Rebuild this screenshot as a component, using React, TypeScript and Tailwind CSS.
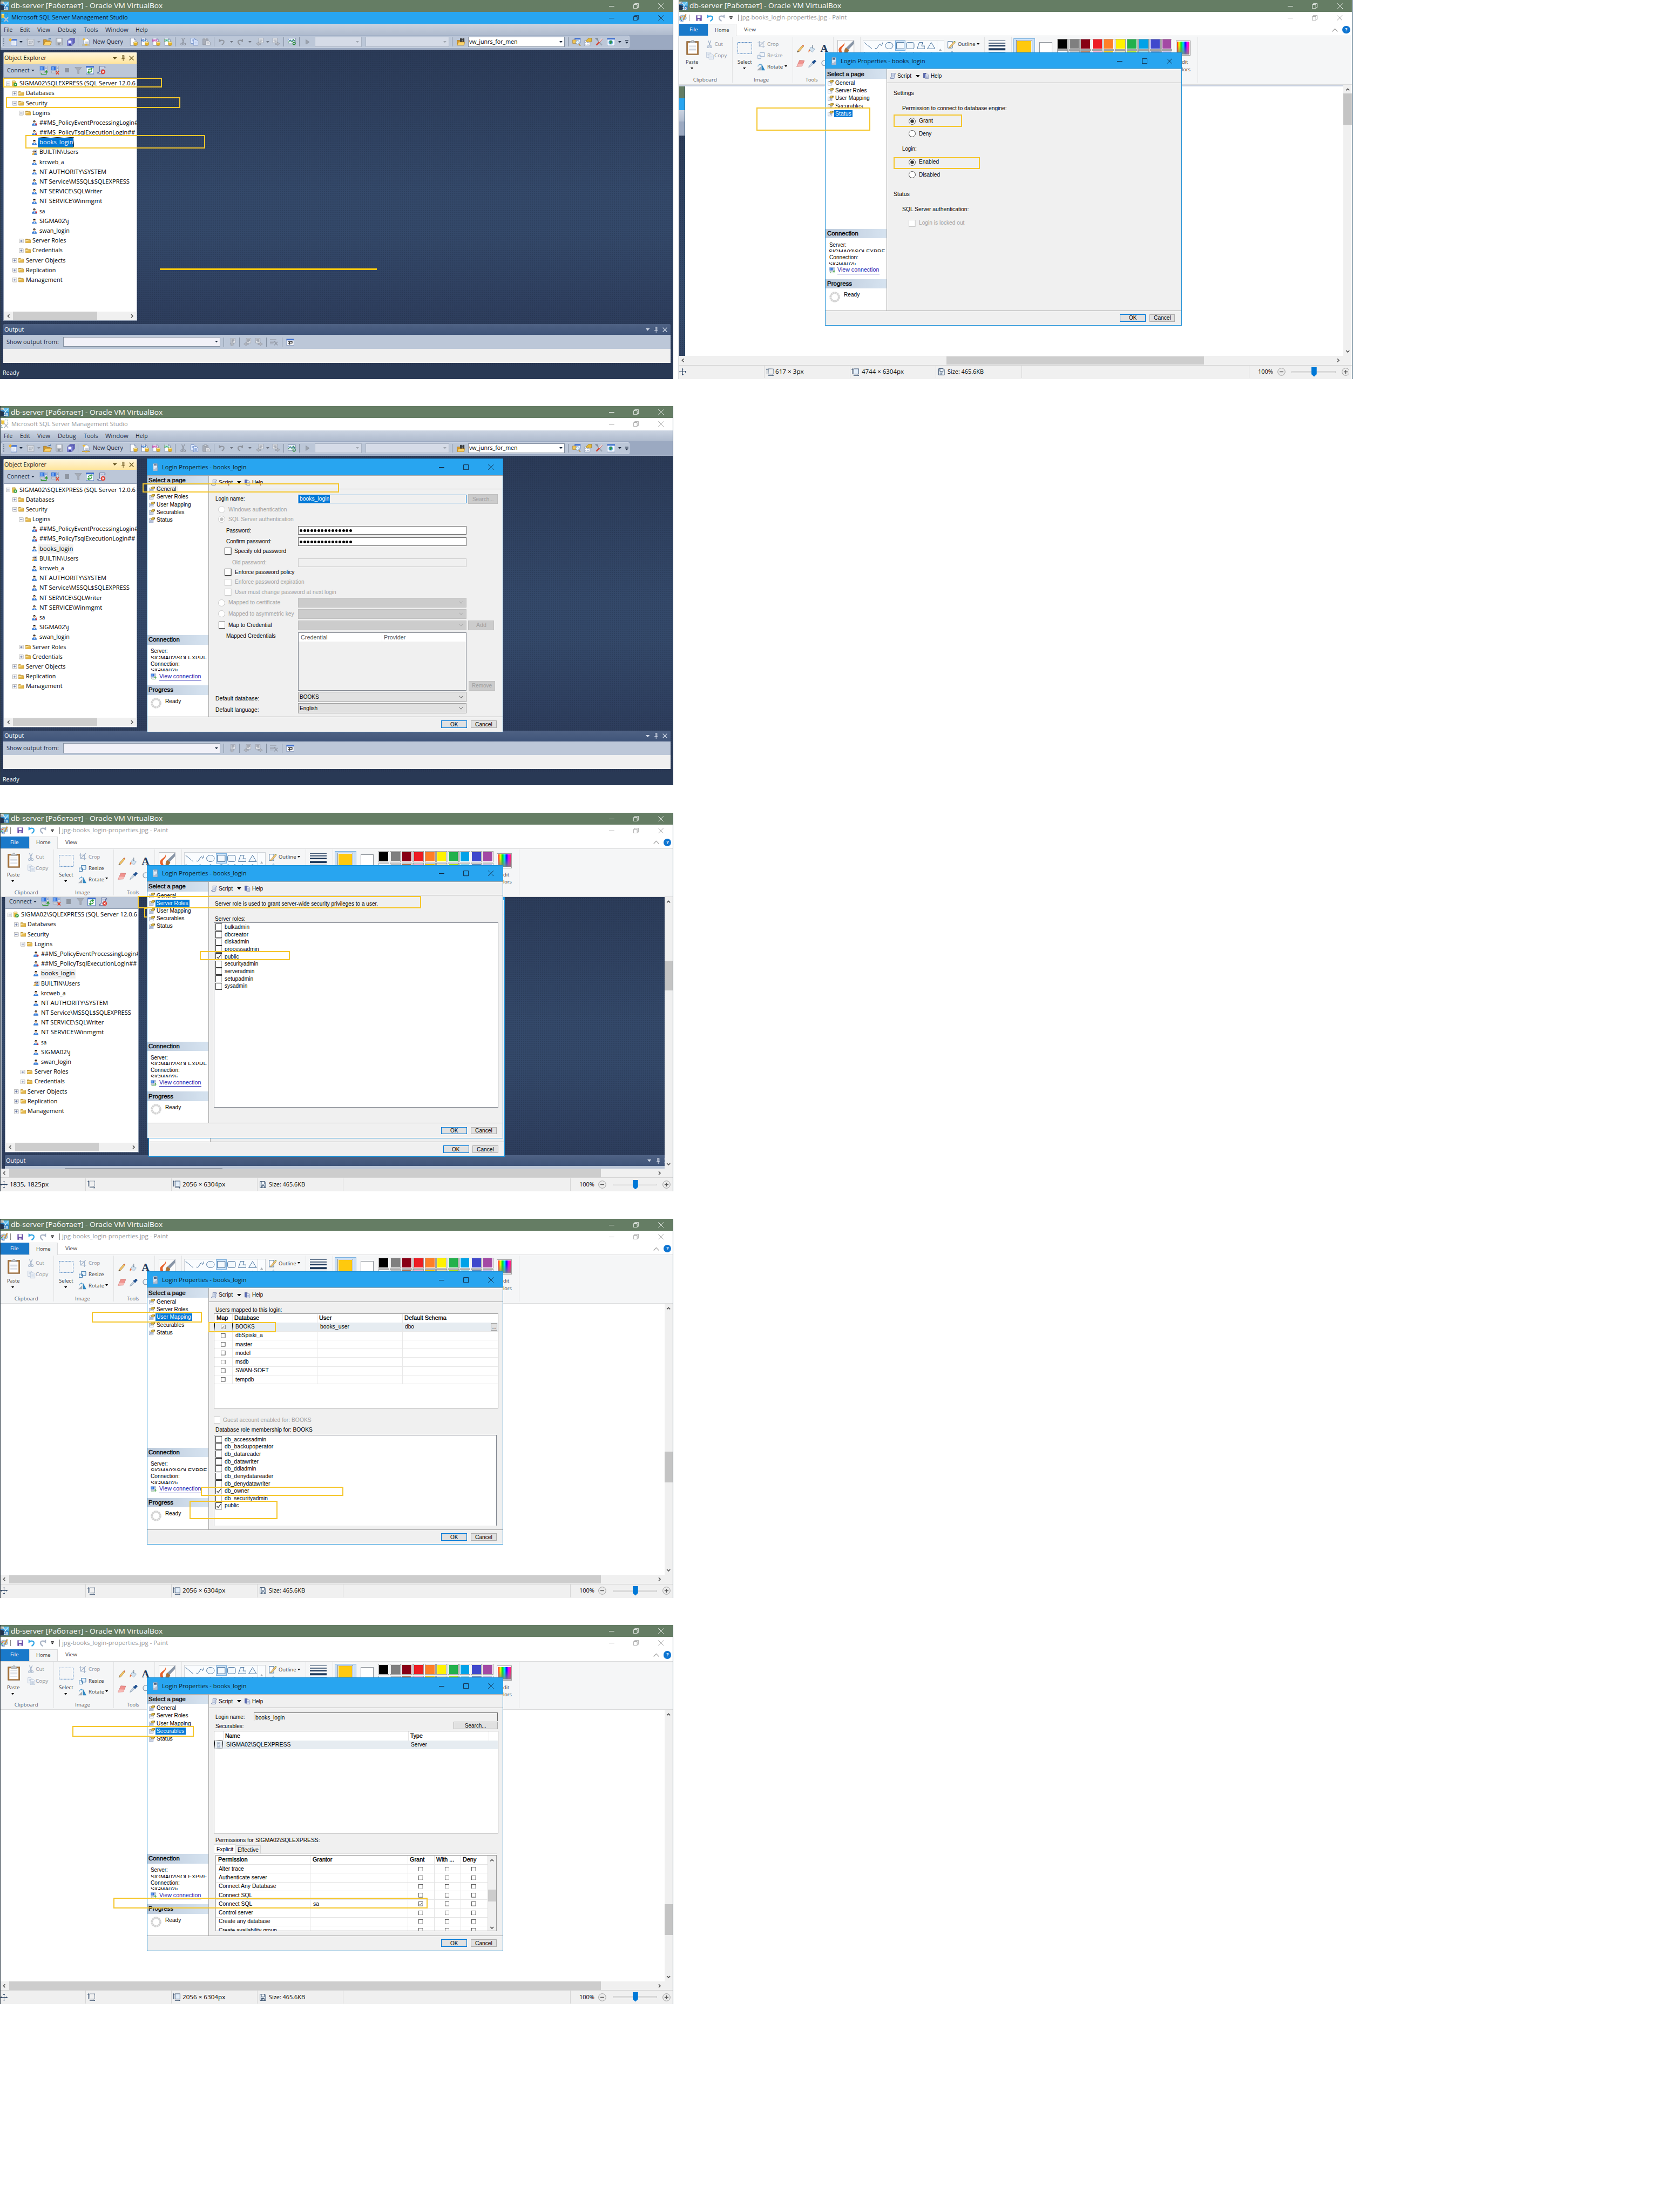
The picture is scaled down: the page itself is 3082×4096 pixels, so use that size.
import React, { useLayoutEffect, useRef } from "react";

type Node = React.ReactNode;
type Cell = [number, number, Node];

/* ---------- layout and text helpers ---------- */

function Flow({ col, from = 0, items, className = "" }: { col?: boolean; from?: number; items: Cell[]; className?: string }) {
  let end = from;
  return (
    <div className={(col ? "flex flex-col items-stretch " : "flex flex-row items-center h-full ") + className}>
      {items.map(([at, size, node], i) => {
        const gap = at - end;
        end = at + size;
        return (
          <div
            key={i}
            className={col ? "shrink-0" : "shrink-0 flex items-center"}
            style={col ? { marginTop: gap, height: size } : { marginLeft: gap, width: size }}
          >
            {node}
          </div>
        );
      })}
    </div>
  );
}

function T({ w, children, className = "" }: { w: number; children: Node; className?: string }) {
  const ref = useRef<HTMLSpanElement>(null);
  useLayoutEffect(() => {
    const el = ref.current;
    if (!el || !el.parentElement) return;
    el.style.transform = "none";
    const natural = el.getBoundingClientRect().width;
    const target = el.parentElement.getBoundingClientRect().width;
    if (natural > 0) el.style.transform = `scaleX(${target / natural})`;
  });
  return (
    <span className={"block shrink-0 whitespace-nowrap leading-[1.3] " + className} style={{ width: w }}>
      <span ref={ref} className="inline-block origin-left">
        {children}
      </span>
    </span>
  );
}

const tx = (x: number, w: number, s: string, className = ""): Cell => [x, w, s ? <T w={w} className={className}>{s}</T> : null];
const ic = (center: number, size: number, node: Node): Cell => [center - size / 2, size, node];
const line = (center: number, h: number, items: Cell[], from = 175): Cell => [center - h / 2, h, <Flow from={from} items={items} />];

function Svg({ w, h, vb, children, className = "" }: { w: number; h: number; vb?: string; children: Node; className?: string }) {
  return (
    <svg width={w} height={h} viewBox={vb || `0 0 ${w} ${h}`} className={"shrink-0 block " + className} fill="none" preserveAspectRatio="none">
      {children}
    </svg>
  );
}

const Tri = ({ c = "#1b293e", w = 9, h = 5 }: { c?: string; w?: number; h?: number }) => (
  <Svg w={w} h={h} vb="0 0 10 6"><path d="M0 0h10L5 6z" fill={c} /></Svg>
);
const Chevron = ({ dir, c = "#505050" }: { dir: "l" | "r" | "u" | "d"; c?: string }) => {
  const d = { l: "M9 2L4 7l5 5", r: "M5 2l5 5-5 5", u: "M2 9l5-5 5 5", d: "M2 5l5 5 5-5" }[dir];
  return <Svg w={13} h={13} vb="0 0 14 14"><path d={d} stroke={c} strokeWidth="2.6" /></Svg>;
};

/* ---------- window chrome ---------- */

function WinButtons({ c, single }: { c: string; single?: boolean }) {
  return (
    <div className="flex items-center h-full">
      <Svg w={16} h={16}><path d="M0 8.5h15" stroke={c} strokeWidth="1.4" /></Svg>
      <div className="w-[54px]" />
      <Svg w={16} h={16}>
        {single ? <path d="M1 1h14v14H1z" stroke={c} strokeWidth="1.4" /> : <path d="M1 4h10v11H1zM4 4V1h11v11h-4" stroke={c} strokeWidth="1.3" />}
      </Svg>
      <div className="w-[55px]" />
      <Svg w={16} h={16}><path d="M0.5 0.5l15 15M15.5 0.5l-15 15" stroke={c} strokeWidth="1.4" /></Svg>
    </div>
  );
}

function VmTitle() {
  return (
    <div className="h-[34px] shrink-0 bg-[#657d64] text-white text-[19px] font-['Open_Sans',sans-serif]">
      <Flow
        items={[
          [2, 24, (
            <Svg w={24} h={25}>
              <path d="M0 0h24v25H0z" fill="#2f86c8" />
              <path d="M11 0h13v12L11 10z" fill="#5cc1f2" />
              <path d="M0 9l10 3 5 13H0z" fill="#22344f" />
              <path d="M9 3l7 11M22 2L11 14" stroke="#e8f4fb" strokeWidth="1.6" />
              <path d="M0 0h9v7H0z" fill="#eef2f4" />
              <text x="0.5" y="6" fontSize="6.5" fill="#333" fontFamily="Liberation Sans">64</text>
              <text x="9" y="23" fontSize="11" fontWeight="bold" fill="#fff" fontFamily="Liberation Sans">10</text>
            </Svg>
          )],
          tx(31, 433, "db-server [Работает] - Oracle VM VirtualBox", "pt-px"),
          [1736, 160, <WinButtons c="#ffffff" />],
        ]}
      />
    </div>
  );
}

const Frame = () => <div className="absolute inset-0 border-l-[1.6px] border-r-[1.6px] border-l-[#2f3b46] border-r-[#17405b]" />;

/* ---------- small icons ---------- */

const Expander = ({ plus }: { plus?: boolean }) => (
  <Svg w={13} h={13}>
    <rect x="0.5" y="0.5" width="12" height="12" rx="1" fill="#f4f4f4" stroke="#8f8f8f" />
    <path d={plus ? "M3 6.5h7M6.5 3v7" : "M3 6.5h7"} stroke="#34498c" strokeWidth="1.2" />
  </Svg>
);
const Folder = () => (
  <Svg w={16} h={13}>
    <path d="M0 1.5Q0 0 1.5 0H6l1.5 2H14v2H0z" fill="#c39a3c" />
    <path d="M0.5 3H14q1.5 0 1.5 1.5v7q0 1-1 1h-13q-1 0-1-1z" fill="#e6b94e" stroke="#a67c26" strokeWidth="0.8" />
    <path d="M1 3.5h13L1 8z" fill="#fbe6a4" />
  </Svg>
);
const ServerGo = () => (
  <Svg w={15} h={17}>
    <path d="M0.5 2.5v11q0 2.5 5 2.5t5-2.500v-11z" fill="#e9c24a" stroke="#a8842a" strokeWidth="0.7" />
    <ellipse cx="5.500" cy="2.500" rx="5" ry="2" fill="#f8eaa5" stroke="#a8842a" strokeWidth="0.700" />
    <circle cx="10" cy="11.500" r="5" fill="#2f9a3f" />
    <path d="M8.500 8.500l4 3-4 3z" fill="#fff" />
  </Svg>
);
const User = ({ down }: { down?: boolean }) => (
  <Svg w={15} h={15}>
    <path d="M0.500 14.500q0-6.500 6.500-6.500t6.500 6.500z" fill="#3f86e0" stroke="#2c62b8" strokeWidth="0.700" />
    <path d="M5 8.500h4L7 13z" fill="#fff" />
    <circle cx="7" cy="4.800" r="3" fill="#eebd8e" />
    <path d="M3.800 5Q3 0 7 0t3.200 5Q9.500 3 7 3T3.800 5z" fill="#1d1712" />
    {down && <path d="M12.500 7v6M10.700 11l1.800 3 1.800-3z" stroke="#d22" strokeWidth="1.300" fill="#d22" />}
  </Svg>
);
const Group = () => (
  <Svg w={16} h={16}>
    <path d="M6 0h10v14H6z" fill="#dfe7f5" stroke="#3d62a8" strokeWidth="0.700" />
    <path d="M8 3h6M8 5h6" stroke="#6d87bd" strokeWidth="0.800" />
    <path d="M0 15q0-5 5-5t5 5z" fill="#e0ad33" />
    <path d="M6 15q0-4.500 4.500-4.500T15 15z" fill="#3f86e0" />
    <circle cx="5" cy="7" r="2.700" fill="#eebd8e" /><circle cx="10.500" cy="8" r="2.500" fill="#eebd8e" />
    <path d="M2 7q0-4 3-4t3 4q-1-2-3-2T2 7zM8 8q0-3.500 2.500-3.500T13 8q-1-1.500-2.500-1.500T8 8z" fill="#1d1712" />
  </Svg>
);
const Pin = ({ c }: { c: string }) => (
  <Svg w={10} h={17}><path d="M2.500 1h5v9h-5zM6 1v9M0 10.500h10M5 10.500V17" stroke={c} strokeWidth="1.400" /></Svg>
);
const Cross = ({ c }: { c: string }) => <Svg w={14} h={14}><path d="M1 1l12 12M13 1L1 13" stroke={c} strokeWidth="2" /></Svg>;

const Doc = ({ tag, tc }: { tag?: string; tc?: string }) => (
  <Svg w={23} h={23}>
    <path d="M2 1h11l5 5v16H2z" fill="#fbfcff" stroke="#5d6f96" />
    <path d="M13 1v5h5" fill="#c9d5ea" stroke="#5d6f96" />
    <path d="M12 13v7q0 2 5 2t5-2v-7z" fill="#e8b62a" stroke="#9c7616" strokeWidth="0.800" />
    <ellipse cx="17" cy="13" rx="5" ry="2" fill="#fbe998" stroke="#9c7616" strokeWidth="0.800" />
    {tag && <text x="0" y="11" fontSize="8.500" fontWeight="bold" fill={tc} fontFamily="Liberation Mono">{tag}</text>}
  </Svg>
);
const NewProject = () => (
  <Svg w={24} h={24}>
    <path d="M7 4h16v19H7z" fill="#eef3fc" stroke="#3e66b5" /><path d="M7 4h16v4H7z" fill="#3e6fd0" />
    <path d="M10 12h9M10 15h9M10 18h6" stroke="#b9c6de" strokeWidth="1.500" />
    <path d="M5 0l1.500 4L11 5 7 7l0 5-3-3-4 1 2-4-2-4 4 1z" fill="#f3b72e" />
  </Svg>
);
const GrayGrid = () => (
  <Svg w={24} h={24}>
    <path d="M5 4h18v18H5z" fill="#d7dbe2" stroke="#8d949f" /><path d="M8 10h3v3H8zM13 10h3v3h-3zM8 15h3v3H8zM13 15h3v3h-3zM18 10h2v3h-2z" fill="#9aa1ac" />
    <path d="M4 0l1.500 3.500L9 5 5.500 6.500 4 10 2.500 6.500 0 5l2.500-1.500z" fill="#b3b8c0" />
  </Svg>
);
const OpenFolder = () => (
  <Svg w={25} h={22}>
    <path d="M1 5h8l2 3h9v12H1z" fill="#d69a2c" stroke="#8f671c" /><path d="M6 11h18l-4 10H1z" fill="#fbd36b" stroke="#a87820" />
    <path d="M13 5q3-4 8-2M21 0v4h-4" stroke="#5b7fae" strokeWidth="1.600" />
  </Svg>
);
const Floppy = ({ c, d }: { c: string; d: string }) => (
  <Svg w={21} h={21}><path d="M1 1h19v19H3l-2-2z" fill={c} stroke={d} /><path d="M5 1h11v9H5z" fill="#f0f2f6" /><path d="M6 13h9v7H6z" fill={d} /><path d="M12 14.500h2v4h-2z" fill="#f0f2f6" /></Svg>
);
const FloppyStack = () => (
  <Svg w={23} h={23}>
    <path d="M8 1h14v14H8z" fill="#6f73c9" stroke="#3a3d8e" /><path d="M5 4h14v14H5z" fill="#7f83d6" stroke="#3a3d8e" />
    <path d="M1 8h14v14H1z" fill="#8f93e6" stroke="#3a3d8e" /><path d="M4 8h8v6H4z" fill="#fff" /><path d="M5 17h6v5H5z" fill="#3a3d8e" />
  </Svg>
);
const NewQuery = () => (
  <Svg w={24} h={25}>
    <path d="M5 3h10l5 5v11H5z" fill="#fbfcff" stroke="#5d6f96" /><path d="M9 12v5q0 1.500 4.500 1.500T18 17v-5z" fill="#c9cfda" />
    <path d="M0 22h24M12 19v3" stroke="#b98b1f" strokeWidth="2" /><path d="M9 20h6v4H9z" fill="#e8b62a" />
    <path d="M5.500 0l1.500 4 4 1.500-4 1.500-1.500 4L4 7 0 5.500 4 4z" fill="#f6b91e" />
  </Svg>
);
const Scissors = ({ c = "#8a909c" }: { c?: string }) => (
  <Svg w={16} h={22}><path d="M4 0l6 15M12 0L6 15" stroke={c} strokeWidth="2" /><circle cx="4" cy="18" r="2.800" stroke={c} strokeWidth="1.800" /><circle cx="12" cy="18" r="2.800" stroke={c} strokeWidth="1.800" /></Svg>
);
const CopyIcon = ({ c = "#3e66b5", f = "#e6efff" }: { c?: string; f?: string }) => (
  <Svg w={22} h={22}><path d="M1 1h9l3 3v12H1z" fill={f} stroke={c} /><path d="M3.500 6h6M3.500 9h6" stroke={c} /><path d="M8 6h9l4 4v11H8z" fill={f} stroke={c} /><path d="M11 12h7M11 15h7M11 18h7" stroke={c} /></Svg>
);
const PasteGray = () => (
  <Svg w={23} h={22}><path d="M1 3h15v17H1z" fill="#a9aeb8" stroke="#7f8591" /><path d="M5 1h7v4H5z" fill="#d9dce2" stroke="#7f8591" /><path d="M9 9h9l4 4v8H9z" fill="#e3e5ea" stroke="#7f8591" /><path d="M12 14h7M12 17h7" stroke="#9a9fab" /></Svg>
);
const Curl = ({ flip, c = "#8f949e", w = 18 }: { flip?: boolean; c?: string; w?: number }) => (
  <Svg w={w} h={w} vb="0 0 18 18" className={flip ? "-scale-x-100" : ""}><path d="M4 5q7-3 10.500 1 2.500 6-5.500 11" stroke={c} strokeWidth="3" /><path d="M1 0v9.500l7.500-4.500z" fill={c} /></Svg>
);
const Nav = ({ flip, up }: { flip?: boolean; up?: boolean }) => (
  <Svg w={23} h={23} className={flip ? "-scale-x-100" : ""}>
    <path d="M8 1h13v13H8z" fill="#e3e5ea" stroke="#8a909c" /><path d="M10 4h9M10 7h9M10 10h6" stroke="#8a909c" strokeWidth="1.200" />
    {up ? <path d="M12 12l6 5h-3v6H9v-6H6z" fill="#b4b8c0" stroke="#8a909c" /> : <path d="M1 17l7-5v3h6v4H8v3z" fill="#b4b8c0" stroke="#8a909c" />}
  </Svg>
);
const Activity = () => (
  <Svg w={24} h={22}><path d="M1 1h21v16H1z" fill="#e9f0fb" stroke="#5a6e93" /><path d="M2 13l5-7 5 6 4-7 5 5" stroke="#2b8b3a" strokeWidth="1.800" /><path d="M2 5l6 5 6-4 7 8" stroke="#3c6fd0" strokeWidth="1.400" /><circle cx="18" cy="16" r="3.500" stroke="#218a2f" strokeWidth="2" /></Svg>
);
const PcPlug = ({ x, s = 25 }: { x?: boolean; s?: number }) => (
  <Svg w={s} h={s} vb="0 0 25 25">
    <path d="M1 1h14v12H1z" fill="#2e6fdc" stroke="#9fb6d8" strokeWidth="1.500" /><path d="M3 3h6v8H3z" fill="#6fa5f2" /><path d="M2 15h12v5H2z" fill="#d6dbe3" stroke="#8591a5" />
    <path d="M16 1h6v13h-6z" fill="#e3e8ef" stroke="#8591a5" /><path d="M17 4h4M17 7h4" stroke="#3c6fd0" />
    {x ? <path d="M15 15l8 9M23 15l-8 9" stroke="#e03a1e" strokeWidth="2.600" /> : <path d="M5 20v4h15v-9M16.500 18l3.500-5 3.500 5z" stroke="#2f9a2f" strokeWidth="1.800" fill="#2f9a2f" fillOpacity="0" />}
  </Svg>
);
const Funnel = () => <Svg w={21} h={20}><path d="M1 1h19l-7 9v9H9v-9z" fill="#a8adb7" stroke="#888e99" /></Svg>;
const Refresh = () => (
  <Svg w={24} h={24}><path d="M1 1h22v22H1z" fill="#f8fbff" stroke="#3e66b5" strokeWidth="1.500" /><path d="M1 1h22v4H1z" fill="#3e6fd0" /><path d="M7 13q1-5 8-4M15 6v5l3-3zM17 13q-1 6-8 5M9 21v-6l-4 3z" stroke="#2f9a3a" strokeWidth="2" fill="#2f9a3a" fillOpacity="0.300" /></Svg>
);
const ScriptIcon = ({ err, s = 17 }: { err?: boolean; s?: number }) => (
  <Svg w={s} h={s} vb="0 0 20 20">
    <path d="M6 1h11q2 0 2 3h-3v11q0 4-3 4H3q-2 0-2-3h3q2-2 2-5z" fill="#e2e9f5" stroke="#58699a" strokeWidth="1.300" /><path d="M8 5h6M8 8h6M8 11h6M7 14h6" stroke="#7c8fb8" />
    {err && <><circle cx="14" cy="14" r="5.500" fill="#dc4238" /><path d="M12 12l4 4M16 12l-4 4" stroke="#fff" strokeWidth="1.500" /></>}
  </Svg>
);
const HelpDoc = () => (
  <Svg w={16} h={17}><path d="M0.700 0.700h7v13h-7z" fill="#5868b4" stroke="#3b4583" /><path d="M6 3h6l3 3v10H6z" fill="#eef2fb" stroke="#58699a" /><path d="M8 8h5M8 10.500h5M8 13h5" stroke="#6d82b8" /></Svg>
);
const ServerBox = ({ w = 14, h = 22 }: { w?: number; h?: number }) => (
  <Svg w={w} h={h} vb="0 0 14 22"><path d="M1 2q0-1.500 1.500-1.500h9Q13 0.500 13 2v19H1z" fill="#dde6f1" stroke="#70839f" /><path d="M3 4h8M3 7h8" stroke="#4a5f80" strokeWidth="1.600" /><path d="M9 12h4v9H1v-4q6 0 8-5z" fill="#aebdd2" /></Svg>
);
const PageIcon = () => (
  <Svg w={17} h={16}>
    <path d="M1 4h11v11H1z" fill="#fff" stroke="#5f77a8" /><path d="M3 8h2M3 11h2M6.500 8h4M6.500 11h4" stroke="#3d5c9c" strokeWidth="1.200" />
    <path d="M5 4l5-4h6v5l-4 3-2-2-3 1z" fill="#d9b445" stroke="#6d571a" strokeWidth="0.800" /><path d="M13 1.500h3v4" fill="#3c3c30" />
  </Svg>
);

/* ---------- management studio ---------- */

type TreeRow = { lvl: number; kind: "server" | "folder" | "user" | "userdown" | "group"; plus?: boolean; w: number; t: string };
const TREE: TreeRow[] = [
  { lvl: 0, kind: "server", w: 331, t: "SIGMA02\\SQLEXPRESS (SQL Server 12.0.6" },
  { lvl: 1, kind: "folder", plus: true, w: 81, t: "Databases" },
  { lvl: 1, kind: "folder", w: 61, t: "Security" },
  { lvl: 2, kind: "folder", w: 51, t: "Logins" },
  { lvl: 3, kind: "userdown", w: 282, t: "##MS_PolicyEventProcessingLogin#" },
  { lvl: 3, kind: "userdown", w: 273, t: "##MS_PolicyTsqlExecutionLogin##" },
  { lvl: 3, kind: "user", w: 96, t: "books_login" },
  { lvl: 3, kind: "group", w: 111, t: "BUILTIN\\Users" },
  { lvl: 3, kind: "user", w: 70, t: "krcweb_a" },
  { lvl: 3, kind: "user", w: 191, t: "NT AUTHORITY\\SYSTEM" },
  { lvl: 3, kind: "user", w: 257, t: "NT Service\\MSSQL$SQLEXPRESS" },
  { lvl: 3, kind: "user", w: 179, t: "NT SERVICE\\SQLWriter" },
  { lvl: 3, kind: "user", w: 179, t: "NT SERVICE\\Winmgmt" },
  { lvl: 3, kind: "userdown", w: 16, t: "sa" },
  { lvl: 3, kind: "user", w: 84, t: "SIGMA02\\j" },
  { lvl: 3, kind: "user", w: 86, t: "swan_login" },
  { lvl: 2, kind: "folder", plus: true, w: 96, t: "Server Roles" },
  { lvl: 2, kind: "folder", plus: true, w: 86, t: "Credentials" },
  { lvl: 1, kind: "folder", plus: true, w: 113, t: "Server Objects" },
  { lvl: 1, kind: "folder", plus: true, w: 85, t: "Replication" },
  { lvl: 1, kind: "folder", plus: true, w: 104, t: "Management" },
];

function TreeLine({ r, focus }: { r: TreeRow; focus?: boolean }) {
  const sel = r.t === "books_login";
  const x = r.lvl === 0 ? 54.5 : r.lvl === 1 ? 73.5 : r.lvl === 2 ? 92.5 : 111.4;
  const icon = r.kind === "server" ? <ServerGo /> : r.kind === "folder" ? <Folder /> : r.kind === "group" ? <Group /> : <User down={r.kind === "userdown"} />;
  const cells: Cell[] = [];
  if (r.lvl < 3) cells.push([16 + r.lvl * 18.8, 13, <Expander plus={r.plus} />]);
  cells.push([x - 21, 16, icon]);
  cells.push([
    x - 2, r.w + 4,
    <div className={"h-[27px] w-full px-[2px] flex items-center " + (sel ? (focus ? "bg-[#0078d7] text-white outline-dotted outline-1 outline-[#332211]" : "bg-[#f0f0f0]") : "")}>
      <T w={r.w}>{r.t}</T>
    </div>,
  ]);
  return <div className="h-[28px] shrink-0"><Flow from={10} items={cells} /></div>;
}

const Sep = () => <div className="w-[1.6px] h-[26px] bg-[#8591a2]" />;

function ObjectExplorer({ focus }: { focus?: boolean }) {
  return (
    <div className="w-[382px] h-[765px] bg-white border border-[#8e9bb0] border-t-0 flex flex-col overflow-hidden rounded-t-[3px] text-[16px]">
      <div className="h-[31px] shrink-0 bg-gradient-to-b from-[#fff6dc] to-[#ffe59c] text-[15.5px] text-[#1b1b1b] pt-px">
        <Flow from={10} items={[tx(12, 120, "Object Explorer"), ic(326, 11, <Tri c="#5c4a16" w={11} h={6} />), ic(351, 10, <Pin c="#75612a" />), ic(375, 14, <Cross c="#5c4a16" />)]} />
      </div>
      <div className="h-[39px] shrink-0 bg-[#bcc7d8] text-[15.5px] text-[#1b293e]">
        <Flow
          from={10}
          items={[
            tx(20, 64, "Connect"), ic(94, 9, <Tri />), ic(124, 25, <PcPlug />), ic(157, 25, <PcPlug x />),
            ic(190, 13, <div className="w-[13px] h-[13px] bg-[#8f96a1]" />), ic(223, 21, <Funnel />), ic(256, 24, <Refresh />), ic(289, 24, <ScriptIcon err s={24} />),
          ]}
        />
      </div>
      <div className="pt-[3px] h-[668px] shrink-0 overflow-hidden border-t border-[#8e9bb0]">
        {TREE.map((r) => <TreeLine key={r.t} r={r} focus={focus} />)}
      </div>
      <div className="h-[25px] mx-px bg-[#f0f0f0]">
        <Flow from={11} items={[ic(24, 13, <Chevron dir="l" />), [37, 239, <div className="w-full h-[24px] bg-[#cdcdcd]" />], ic(375, 13, <Chevron dir="r" />)]} />
      </div>
    </div>
  );
}

function OutputPane() {
  return (
    <div className="w-[1902px] h-[110px] flex flex-col mt-[9px]">
      <div className="h-[31px] bg-gradient-to-b from-[#4f6284] to-[#3f5479] text-white text-[15.5px] rounded-t-[3px] pt-px">
        <Flow from={9} items={[tx(12, 56, "Output"), ic(1846, 11, <Tri c="#d4dbe8" w={11} h={7} />), ic(1871, 10, <Pin c="#d4dbe8" />), ic(1895, 14, <Cross c="#d4dbe8" />)]} />
      </div>
      <div className="h-[39px] bg-[#bcc7d8] text-[15.5px] text-[#1b293e]">
        <Flow
          from={9}
          items={[
            tx(19, 149, "Show output from:"),
            [179.5, 449, <div className="h-[29px] w-full bg-[#f2f1f8] border-[1.6px] border-[#8591a2] flex items-center justify-end pr-[5px]"><Tri /></div>],
            ic(638.5, 2, <Sep />), ic(661, 23, <Nav up />), ic(683, 2, <Sep />), ic(706.5, 23, <Nav />), ic(738, 23, <Nav flip />), ic(760, 2, <Sep />),
            ic(782, 24, <Svg w={24} h={20}><path d="M0 3h18M0 7h18M0 11h12M0 15h10" stroke="#9aa1ac" strokeWidth="1.800" /><path d="M12 8l10 11M22 9L12 19" stroke="#8a909c" strokeWidth="2" /></Svg>),
            ic(804, 2, <Sep />),
            ic(827, 23, <Svg w={23} h={20}><path d="M1 1h21v18H1z" fill="#fbfcff" stroke="#6d84b0" /><path d="M1 1h21v4H1z" fill="#3e6fd0" /><path d="M6 8h11v5H9M11 10l-4 3 4 3.500" stroke="#1b1b1b" strokeWidth="1.800" /></Svg>),
          ]}
        />
      </div>
      <div className="h-[40px] bg-[#f0f0f0]" />
    </div>
  );
}

const FlatCombo = () => (
  <div className="h-[29px] w-full bg-[#d5dbe7] border-[1.600px] border-[#a9b3c3] flex items-center justify-end pr-[6px]"><Tri c="#a0a6b0" /></div>
);

function Studio({ active, focus, children }: { active?: boolean; focus?: boolean; children?: Node }) {
  const tc = active ? "#1d1d2b" : "#999999";
  return (
    <div className="relative w-[1920px] h-[1080px] shrink-0 overflow-hidden bg-[#293955] flex flex-col font-['Open_Sans',sans-serif] text-[16px] text-black">
      <VmTitle />
      <div className={"h-[34px] shrink-0 text-[16.5px] " + (active ? "bg-[#28a5f0] text-[#101828]" : "bg-white text-[#999999]")}>
        <Flow
          items={[
            [3, 22, (
              <Svg w={22} h={25}>
                <path d="M1 2v9q0 2 4 2t4-2V2z" fill="#f0c83c" stroke="#a8842a" strokeWidth="0.700" /><ellipse cx="5" cy="2.500" rx="4" ry="1.700" fill="#fbe998" />
                <path d="M11 1h8v8M1 16v7h6" stroke="#3a7f8c" strokeWidth="1.200" strokeDasharray="3 1.500" />
                <path d="M8 10l12 13M20 11L9 23" stroke="#dfe5ec" strokeWidth="3" /><path d="M8 10l12 13M20 11L9 23" stroke="#66727f" strokeWidth="1" />
              </Svg>
            )],
            tx(32, 332, "Microsoft SQL Server Management Studio"),
            [1736, 160, <WinButtons c={tc} />],
          ]}
        />
      </div>
      <div className="h-[32px] shrink-0 bg-gradient-to-b from-[#cad3e1] to-[#aebacd] text-[15.5px] text-[#1b293e] pt-[2px]">
        <Flow
          items={[tx(11, 25, "File"), tx(56.500, 29, "Edit"), tx(106.500, 37, "View"), tx(165, 52, "Debug"), tx(238, 41, "Tools"), tx(300.500, 66, "Window"), tx(387, 35, "Help")]}
        />
      </div>
      <div className="h-[41px] shrink-0 bg-[#9ba9c1] border-b-[3px] border-b-[#a5b2c8] pt-[2px] pl-[3px] text-[15.5px] text-[#1b293e]">
        <div className="h-[35px] w-[1792px] bg-[#bcc7d8] rounded-[4px] border border-[#cdd6e4]">
          <Flow
            from={4}
            items={[
              ic(10, 3, <Svg w={3} h={22}><path d="M1.500 0v22" stroke="#56667f" strokeWidth="2.500" strokeDasharray="2.500 2.500" /></Svg>),
              ic(36, 24, <NewProject />), ic(60, 9, <Tri />), ic(86, 24, <GrayGrid />), ic(110, 9, <Tri c="#8a909c" />), ic(136, 25, <OpenFolder />),
              ic(169, 21, <Floppy c="#b5bac3" d="#8a909c" />), ic(202, 23, <FloppyStack />), ic(223, 2, <Sep />), ic(245, 24, <NewQuery />),
              tx(265, 86, "New Query"), ic(380, 23, <Doc />), ic(413, 23, <Doc tag="MDX" tc="#1e5fb8" />), ic(446, 23, <Doc tag="DMX" tc="#c02aa0" />), ic(479, 23, <Doc tag="XML" tc="#1f9a3f" />),
              ic(499.500, 2, <Sep />), ic(521.500, 16, <Scissors />), ic(555, 22, <CopyIcon />), ic(589, 23, <PasteGray />), ic(610, 2, <Sep />),
              ic(632, 18, <Curl />), ic(660, 9, <Tri c="#6e7480" />), ic(685, 18, <Curl flip />), ic(713, 9, <Tri c="#6e7480" />), ic(741, 23, <Nav />), ic(763, 9, <Tri c="#6e7480" />), ic(788, 23, <Nav flip />),
              ic(809, 2, <Sep />), ic(833, 24, <Activity />), ic(854, 2, <Sep />), ic(877, 11, <Svg w={11} h={15}><path d="M0.500 0.500l10 7-10 7z" fill="#9aa1ac" stroke="#7f8591" /></Svg>),
              [897, 134, <FlatCombo />], [1042, 239, <FlatCombo />], ic(1290, 2, <Sep />),
              ic(1314, 24, <Svg w={24} h={22}><path d="M1 7h8l2 3h10v11H1z" fill="#d69a2c" stroke="#8f671c" /><path d="M5 12h18l-3 9H1z" fill="#fbd36b" stroke="#a87820" /><path d="M10 2h4v9h-4zM17 2h4v9h-4zM14 5h3" fill="#3b3b3b" stroke="#3b3b3b" strokeWidth="1.500" /></Svg>),
              [1335, 276, <div className="h-[29px] w-full bg-white border-[1.600px] border-[#8591a2] flex items-center justify-between pl-[2px] pr-[5px] text-black"><T w={138}>vw_junrs_for_men</T><Tri /></div>],
              ic(1620, 2, <Sep />),
              ic(1644, 24, <Svg w={24} h={24}><path d="M7 1h16v14H7z" fill="#eaf1fc" stroke="#3e66b5" /><path d="M7 1h16v4H7z" fill="#3e6fd0" /><path d="M1 6h10v10H1z" fill="#f2c757" stroke="#a87820" /><circle cx="15" cy="13" r="5" fill="#dff0fb" stroke="#6b8caf" strokeWidth="1.500" /><path d="M18 17l5 6" stroke="#b58a3a" strokeWidth="2.600" /></Svg>),
              ic(1677, 24, <Svg w={24} h={24}><path d="M2 9h16v14H2z" fill="#fff" stroke="#6a7b9a" /><path d="M4 14h3M4 18h3M9 14h6M9 18h6" stroke="#3d5c9c" strokeWidth="1.500" /><path d="M6 9l8-8h9v9l-6 3-3-3-4 2z" fill="#e4b93c" stroke="#7d611a" /></Svg>),
              ic(1709, 24, <Svg w={24} h={24}><path d="M4 3l16 18" stroke="#9aa5b3" strokeWidth="3.500" /><path d="M20 3L4 21" stroke="#d24a3c" strokeWidth="4" /><path d="M20 2l-8 9" stroke="#e4e9ee" strokeWidth="3" /><path d="M1 2l6 1v4" stroke="#7d8996" strokeWidth="3" /></Svg>),
              ic(1742, 24, <Svg w={24} h={24}><path d="M1 1h22v22H1z" fill="#f4f8ff" stroke="#6d84b0" /><path d="M1 1h22v4H1z" fill="#3e6fd0" /><circle cx="11" cy="13" r="6" fill="#58a8e0" /><path d="M7 10q4-4 8-1l-2 7-4 2z" fill="#2f8f4a" /></Svg>),
              ic(1767, 9, <Tri />), ic(1787, 9, <Svg w={9} h={13}><path d="M0 3h9" stroke="#1b293e" strokeWidth="1.800" /><path d="M0 7h9l-4.500 5z" fill="#1b293e" /></Svg>),
            ]}
          />
        </div>
      </div>
      <div className="h-[901px] shrink-0 pl-[9px] pt-[9px] bg-[radial-gradient(rgba(20,30,50,0.28)_1px,transparent_1.4px),linear-gradient(#2b3b58_0%,#2f4160_20%,#34496a_45%,#34496a_58%,#2f4060_80%,#2a3956_100%)] bg-[length:6px_6px,100%_100%]">
        <ObjectExplorer focus={focus} />
        <OutputPane />
      </div>
      <div className="h-[38px] shrink-0 text-white text-[15.5px] pt-[5px]">
        <Flow items={[tx(7, 47, "Ready")]} />
      </div>
      <Frame />
      {children}
    </div>
  );
}

/* ---------- login dialog ---------- */

const Check = ({ w = 19.5, h = 20, on, dis, light }: { w?: number; h?: number; on?: boolean; dis?: boolean; light?: boolean }) => (
  <Svg w={w} h={h} vb="0 0 20 20">
    <rect x="0.800" y="0.800" width="18.400" height="18.400" fill="#fff" stroke={dis ? "#c8c8c8" : "#2d2d2d"} strokeWidth={light ? 1.9 : 1.5} />
    {on && <path d="M4 10.500l4 4.500 8-10.500" stroke="#333" strokeWidth={light ? 1.8 : 2} />}
  </Svg>
);
const Radio = ({ on, dis }: { on?: boolean; dis?: boolean }) => (
  <Svg w={20} h={20}>
    <circle cx="10" cy="10" r="9.200" fill="#fff" stroke={dis ? "#c4c4c4" : "#3a3a3a"} strokeWidth="1.400" />
    {on && <circle cx="10" cy="10" r="5" fill={dis ? "#c0c0c0" : "#333"} />}
  </Svg>
);
const Btn = ({ t, w, dis, primary }: { t: string; w: number; dis?: boolean; primary?: boolean }) => (
  <div
    className={
      "w-full h-full flex items-center justify-center pt-px " +
      (primary ? "bg-[#e1e1e1] outline-[2.200px] -outline-offset-[2.200px] outline outline-[#0078d7]" : dis ? "bg-[#cccccc] border border-[#bfbfbf] text-[#a0a0a0]" : "bg-[#e1e1e1] border border-[#adadad]")
    }
  >
    <T w={w}>{t}</T>
  </div>
);
const btn = (x: number, w: number, h: number, t: string, tw: number, k: { dis?: boolean; primary?: boolean } = {}): Cell => [
  x, w, <div className="w-full" style={{ height: h }}><Btn t={t} w={tw} {...k} /></div>,
];

const NAV: [string, number][] = [["General", 56], ["Server Roles", 90], ["User Mapping", 98], ["Securables", 79], ["Status", 46]];
const PaneHead = ({ t, w }: { t: string; w: number }) => (
  <div className="h-full bg-gradient-to-r from-[#bccadb] to-[#d6e3f0] flex items-center pl-[4px] text-[15.5px]"><T w={w} className="[-webkit-text-stroke:0.5px_black]">{t}</T></div>
);
const Clip = ({ t, w }: { t: string; w: number }) => (
  <div className="h-full overflow-hidden pl-[9px]"><T w={w} className="-mt-[4px]">{t}</T></div>
);

function Dialog({ page, soft, at = "left-[420px]", children }: { page: string; soft?: boolean; at?: string; children: Node }) {
  return (
    <div className={"absolute top-[151px] w-[1013px] h-[776px] bg-[#f0f0f0] outline outline-1 -outline-offset-1 outline-[#1b8fd6] flex flex-col font-['Liberation_Sans',Arial,sans-serif] text-[16px] text-black " + at}>
      <div className="h-[45px] shrink-0 bg-[#28a5f0] text-[16.500px] font-['Open_Sans',sans-serif] text-[#0b1a2b]">
        <Flow items={[ic(23, 14, <ServerBox />), tx(42, 241, "Login Properties - books_login", "pt-[3px]"), [831, 160, <WinButtons c="#101828" single />]]} />
      </div>
      <div className="h-[690px] shrink-0 flex border-t border-b border-[#a8a8a8]">
        <div className="w-[175px] shrink-0 bg-white border-r border-[#a8a8a8]">
          <Flow
            col
            from={46}
            items={[
              [46, 27, <PaneHead t="Select a page" w={106} />],
              ...NAV.map(([t, w], i): Cell => [
                74 + i * 21.900, 21.900,
                <Flow
                  items={[
                    [5, 17, <PageIcon />],
                    [24, w + 6, <div className={"w-full h-[21px] pl-[3px] flex items-center " + (t === page ? (soft ? "bg-[#f0f0f0]" : "bg-[#0078d7] text-white") : "")}><T w={w}>{t}</T></div>],
                  ]}
                />,
              ]),
              [501, 27, <PaneHead t="Connection" w={89} />],
              line(547, 20, [tx(10, 49, "Server:")], 0),
              [560, 8, <Clip t={"SIGMA02\\SQLEXPRE"} w={161} />],
              line(583, 20, [tx(10, 83, "Connection:")], 0),
              [596, 8, <Clip t={"SIGMA02\\j"} w={77} />],
              line(619, 22, [[10, 17, <PcPlug s={17} />], [34, 120, <div className="border-b border-[#1a1ab0] text-[#1a1ab0] w-full"><T w={119}>View connection</T></div>]], 0),
              [644, 27, <PaneHead t="Progress" w={71} />],
              line(695, 34, [
                [10, 31, <Svg w={31} h={31}><circle cx="15.500" cy="15.500" r="12" stroke="#d4d4d4" strokeWidth="6" strokeDasharray="5.280 1" /></Svg>],
                [51.500, 45, <T w={45} className="-mt-[11px]">Ready</T>],
              ], 0),
            ]}
          />
        </div>
        <div className="grow">
          <div className="h-[39px] border-b border-[#a8a8a8] border-t-2 border-t-white">
            <Flow from={175} items={[[182, 17, <ScriptIcon />], tx(203.500, 40, "Script"), ic(262, 12, <Tri c="#000" w={12} h={7} />), [278, 16, <HelpDoc />], tx(299, 31, "Help")]} />
          </div>
          {children}
        </div>
      </div>
      <div className="h-[41px]">
        <Flow items={[btn(838, 74, 21, "OK", 22, { primary: true }), btn(922.500, 73.500, 21, "Cancel", 49)]} />
      </div>
    </div>
  );
}

const Body = ({ items }: { items: Cell[] }) => <Flow col from={85} items={items} />;
const GRAY = "text-[#a0a0a0]";

const StatusPage = () => (
  <Body
    items={[
      line(114, 20, [tx(193, 58, "Settings")]),
      line(157, 20, [tx(217.500, 298, "Permission to connect to database engine:")]),
      line(193.500, 20, [ic(247, 20, <Radio on />), tx(265, 40, "Grant")]),
      line(230, 20, [ic(247, 20, <Radio />), tx(265, 36, "Deny")]),
      line(273.500, 20, [tx(217.500, 41, "Login:")]),
      line(310.500, 20, [ic(247, 20, <Radio on />), tx(265, 57, "Enabled")]),
      line(347, 20, [ic(247, 20, <Radio />), tx(265, 60, "Disabled")]),
      line(402, 20, [tx(193, 46, "Status")]),
      line(446, 20, [tx(217.500, 190, "SQL Server authentication:")]),
      line(484.500, 20, [[237, 20, <Check dis />], tx(265, 130, "Login is locked out", GRAY)]),
    ]}
  />
);

const Field = ({ kind, children }: { kind?: "focus" | "dis"; children?: Node }) => (
  <div className={"w-full h-[25px] border flex items-center pl-[3px] " + (kind === "focus" ? "border-[#0078d7] bg-[#f0f0f0]" : kind === "dis" ? "border-[#cccccc] bg-[#f0f0f0]" : "border-[#6a6a6a] bg-white")}>{children}</div>
);
const Combo = ({ t, w, dis }: { t?: string; w?: number; dis?: boolean }) => (
  <div className={"w-full h-[28px] border flex items-center justify-between pl-[4px] pr-[7px] " + (dis ? "bg-[#cccccc] border-[#bfbfbf]" : "bg-[#e1e1e1] border-[#a0a0a0]")}>
    {t ? <T w={w || 0}>{t}</T> : <span />}
    <Svg w={12} h={8}><path d="M1 1l5 5.500L11 1" stroke={dis ? "#a0a0a0" : "#444"} strokeWidth="1.400" /></Svg>
  </div>
);
const Dots = () => (
  <div className="flex gap-[2.600px] pl-px pt-[2px]">{Array.from({ length: 15 }, (_, i) => <div key={i} className="w-[7.500px] h-[7.500px] rounded-full bg-black" />)}</div>
);

const GeneralPage = () => (
  <Body
    items={[
      line(113, 27, [tx(194, 84, "Login name:"), [429, 480.500, <Field kind="focus"><div className="h-[21px] bg-[#0078d7] text-white flex items-center px-px"><T w={85}>books_login</T></div></Field>], btn(915, 84, 27, "Search...", 61, { dis: true })]),
      line(143, 20, [ic(212.500, 20, <Radio dis />), tx(231, 167, "Windows authentication", GRAY)]),
      line(171, 20, [ic(212.500, 20, <Radio on dis />), tx(231, 186, "SQL Server authentication", GRAY)]),
      line(202.500, 26, [tx(225, 71, "Password:"), [429, 480.500, <Field><Dots /></Field>]]),
      line(234.500, 26, [tx(225, 129, "Confirm password:"), [429, 480.500, <Field><Dots /></Field>]]),
      line(262, 20, [[221, 20, <Check />], tx(248, 148, "Specify old password")]),
      line(294.500, 26, [tx(241.500, 98, "Old password:", GRAY), [429, 480.500, <Field kind="dis" />]]),
      line(322, 20, [[221, 20, <Check />], tx(249, 170, "Enforce password policy")]),
      line(350, 20, [[221, 20, <Check dis />], tx(249, 198, "Enforce password expiration", GRAY)]),
      line(378.500, 20, [[221, 20, <Check dis />], tx(249, 289, "User must change password at next login", GRAY)]),
      line(408.500, 28, [ic(212.500, 20, <Radio dis />), tx(231, 148, "Mapped to certificate", GRAY), [429, 480.500, <Combo dis />]]),
      line(440.500, 28, [ic(212.500, 20, <Radio dis />), tx(231, 187, "Mapped to asymmetric key", GRAY), [429, 480.500, <Combo dis />]]),
      line(473, 28, [[203, 20, <Check />], tx(231, 124, "Map to Credential"), [429, 480.500, <Combo dis />], btn(915, 73, 28, "Add", 29, { dis: true })]),
      [493.500, 165.500, (
        <div className="flex h-full">
          <div className="w-[254px] pl-[50px] shrink-0"><T w={141}>Mapped Credentials</T></div>
          <div className="w-[480.500px] shrink-0 border border-[#828790] text-[#5a5a5a]">
            <div className="h-[25px] bg-white flex items-center pl-[7px]">
              <T w={76}>Credential</T>
              <div className="w-px h-full bg-[#dcdcdc] ml-[154px] mr-[6px]" />
              <T w={62}>Provider</T>
            </div>
          </div>
          <div className="w-[76px] h-[28px] ml-[6px] self-end"><Btn t="Remove" w={57} dis /></div>
        </div>
      )],
      line(677, 28, [[194, 125, <T w={125} className="mt-[9px]">Default database:</T>], [429, 480.500, <Combo t="BOOKS" w={55} />]]),
      line(709.500, 28, [[194, 124, <T w={124} className="mt-[9px]">Default language:</T>], [429, 480.500, <Combo t="English" w={51} />]]),
    ]}
  />
);

const CheckList = ({ items, on }: { items: [string, number][]; on: string[] }) => (
  <div className="flex flex-col pl-[3px]">
    {items.map(([t, w]) => (
      <div key={t} className="h-[21.040px] flex items-center gap-[7px]"><Check on={on.includes(t)} /><T w={w}>{t}</T></div>
    ))}
  </div>
);

const RolesPage = () => (
  <Body
    items={[
      line(108.500, 20, [tx(193, 465, "Server role is used to grant server-wide security privileges to a user.")]),
      line(152.500, 20, [tx(193, 87, "Server roles:")]),
      [162, 528, (
        <div className="ml-[14px] w-[811px] h-full bg-white border border-[#828790] pt-[1px]">
          <CheckList on={["public"]} items={[["bulkadmin", 71], ["dbcreator", 68], ["diskadmin", 70], ["processadmin", 98], ["public", 41], ["securityadmin", 96], ["serveradmin", 85], ["setupadmin", 82], ["sysadmin", 65]]} />
        </div>
      )],
    ]}
  />
);

const BOLD = "[-webkit-text-stroke:0.5px_black]";
const DBS: [string, number][] = [["BOOKS", 55], ["dbSpiski_a", 78], ["master", 48], ["model", 43], ["msdb", 38], ["SWAN-SOFT", 95], ["tempdb", 53]];

const MappingPage = () => (
  <Body
    items={[
      [97.500, 20, <Flow from={175} items={[tx(194, 190, "Users mapped to this login:")]} />],
      [118, 271, (
        <div className="ml-[14px] w-[811px] h-full bg-white border border-[#a0a0a0]">
          <div className="h-[25px]"><Flow from={190} items={[tx(196, 33, "Map", BOLD), [241.600, 1, <div className="w-px h-[25px] bg-[#e4e4e4]" />], tx(248, 71, "Database", BOLD), [483.600, 1, <div className="w-px h-[25px] bg-[#e4e4e4]" />], tx(490, 36, "User", BOLD), [725.600, 1, <div className="w-px h-[25px] bg-[#e4e4e4]" />], tx(732, 120, "Default Schema", BOLD)]} /></div>
          {DBS.map(([t, w], i) => (
            <div key={t} className={"h-[25px] border-b border-[#e8e8e8] " + (i === 0 ? "bg-[#e6ecf1]" : "")}>
              <Flow
                from={190}
                items={[
                  [190, 1, <div className={i === 0 ? "h-[24px] border-l border-dotted border-black" : ""} />],
                  ic(216, 13, <Check w={13} h={13} light on={i === 0} />),
                  [241.600, 1, <div className={i === 0 ? "h-[24px] border-l border-dotted border-black" : "w-px h-[25px] bg-[#e8e8e8]"} />],
                  tx(250, w, t),
                  [483.600, 1, <div className="w-px h-[25px] bg-[#e8e8e8]" />],
                  tx(492, 83, i === 0 ? "books_user" : ""),
                  [725.600, 1, <div className="w-px h-[25px] bg-[#e8e8e8]" />],
                  tx(734, 26, i === 0 ? "dbo" : ""),
                  [979, 18, i === 0 ? <div className="w-full h-[22px] bg-[#e1e1e1] border border-[#a0a0a0] flex items-end justify-center"><T w={12}>....</T></div> : null],
                ]}
              />
            </div>
          ))}
        </div>
      )],
      line(421.500, 20, [[189, 20, <Check dis />], tx(216.500, 252, "Guest account enabled for: BOOKS", GRAY)]),
      line(450.500, 20, [tx(194, 277, "Database role membership for: BOOKS")]),
      [464, 259, (
        <div className="ml-[14px] w-[807px] h-full bg-white border border-b-0 border-[#828790] pt-[1px]">
          <CheckList
            on={["db_owner", "public"]}
            items={[["db_accessadmin", 119], ["db_backupoperator", 139], ["db_datareader", 104], ["db_datawriter", 97], ["db_ddladmin", 90], ["db_denydatareader", 139], ["db_denydatawriter", 130], ["db_owner", 70], ["db_securityadmin", 123], ["public", 41]]}
          />
        </div>
      )],
    ]}
  />
);

const PERMS: [string, number][] = [["Alter trace", 72], ["Authenticate server", 138], ["Connect Any Database", 164], ["Connect SQL", 96], ["Connect SQL", 96], ["Control server", 98], ["Create any database", 147], ["Create availability group", 166]];
const vbar = (x: number): Cell => [x, 1, <div className="w-px h-[25px] bg-[#e4e4e4]" />];

const SecurablesPage = () => (
  <Body
    items={[
      [98, 24, <Flow from={175} items={[tx(194, 84, "Login name:"), [303, 696, <div className="w-full h-[24px] border-t border-l border-r border-[#6a6a6a] pl-[3px] flex items-center pt-[3px]"><T w={84}>books_login</T></div>]]} />],
      [124, 21.500, <Flow from={175} items={[[194, 81, <T w={81} className="mt-[5px]">Securables:</T>], btn(873, 126, 21.500, "Search...", 61)]} />],
      [150, 291.500, (
        <div className="ml-[14px] w-[811px] h-full bg-white border border-[#a0a0a0]">
          <div className="h-[25.500px]"><Flow from={190} items={[vbar(215), tx(222, 43, "Name", BOLD), vbar(742.600), tx(749, 35, "Type", BOLD), vbar(973)]} /></div>
          <div className="h-[25px] bg-[#e6ecf1]">
            <Flow from={190} items={[[190, 25, <div className="w-full h-[25px] border border-dotted border-black flex items-center justify-center"><ServerBox w={9} h={16} /></div>], tx(224, 184, "SIGMA02\\SQLEXPRESS"), tx(751, 46, "Server")]} />
          </div>
        </div>
      )],
      line(461, 20, [tx(194, 298, "Permissions for SIGMA02\\SQLEXPRESS:")]),
      [473.500, 26, (
        <div className="ml-[14px] h-full flex items-end">
          <div className="w-[64px] h-full bg-white border border-b-0 border-[#dcdcdc] flex items-center justify-center"><T w={48}>Explicit</T></div>
          <div className="w-[70px] h-[24px] border border-b-0 border-l-0 border-[#d4d4d4] flex items-center justify-center pt-px"><T w={60}>Effective</T></div>
        </div>
      )],
      [499.500, 222, (
        <div className="ml-[14px] w-[808px] h-full border border-[#dcdcdc] bg-[#f9f9f9] pt-[2px] pl-[3px]">
          <div className="w-[803px] h-[217px] border border-[#a0a0a0] bg-white flex overflow-hidden">
            <div className="w-[776px] shrink-0 overflow-hidden">
              <div className="h-[25.500px]"><Flow from={194} items={[tx(201, 84, "Permission", BOLD), vbar(463), tx(470, 56, "Grantor", BOLD), vbar(740.500), tx(747, 42, "Grant", BOLD), vbar(816), tx(823, 51, "With ...", BOLD), vbar(892), tx(899, 39, "Deny", BOLD), vbar(968)]} /></div>
              {PERMS.map(([t, w], i) => (
                <div key={i} className="h-[25px] border-t border-[#e4e4e4]">
                  <Flow
                    from={194}
                    items={[
                      tx(203, w, t), vbar(463), tx(472, 17, i === 4 ? "sa" : ""), vbar(740.500), ic(778, 13, <Check w={13} h={13} light on={i === 4} />), vbar(816),
                      ic(854, 13, <Check w={13} h={13} light />), vbar(892), ic(930, 13, <Check w={13} h={13} light />), vbar(968),
                    ]}
                  />
                </div>
              ))}
            </div>
            <div className="w-[25px] h-full bg-[#f0f0f0] flex flex-col items-center">
              <div className="mt-[8px]"><Chevron dir="u" /></div>
              <div className="mt-[77px] w-full h-[33px] bg-[#cdcdcd]" />
              <div className="mt-[69px]"><Chevron dir="d" /></div>
            </div>
          </div>
        </div>
      )],
    ]}
  />
);

/* ---------- paint ---------- */

const ROW1 = ["bg-[#000000]", "bg-[#7f7f7f]", "bg-[#880015]", "bg-[#ed1c24]", "bg-[#ff7f27]", "bg-[#fff200]", "bg-[#22b14c]", "bg-[#00a2e8]", "bg-[#3f48cc]", "bg-[#a349a4]"];
const ROW2 = ["bg-[#ffffff]", "bg-[#c3c3c3]", "bg-[#b97a57]", "bg-[#ffaec9]", "bg-[#ffc90e]", "bg-[#efe4b0]", "bg-[#b5e61d]", "bg-[#99d9ea]", "bg-[#7092be]", "bg-[#c8bfe7]"];
const Swatch = ({ c }: { c: string }) => <div className="w-[31px] h-[31px] bg-white border-[1.600px] border-[#a0a0a0] p-px"><div className={"w-full h-full " + c} /></div>;

const Label = ({ t, w }: { t: string; w: number }) => <T w={w} className="text-[#5f6369]">{t}</T>;

const Pencil = () => <Svg w={20} h={21}><path d="M3 16L15 2l4 3L7 19l-6 2z" fill="#f6c566" stroke="#8f6a35" /><path d="M15 2l4 3 1-3-3-2z" fill="#d8694a" /><path d="M1 21l1.500-4L5 19z" fill="#333" /></Svg>;
const Shape = ({ d }: { d: string }) => <Svg w={24} h={20}><path d={d} stroke="#2f5f8f" strokeWidth="1.400" fill="#f4f9fd" /></Svg>;

const rib = (items: Cell[]): Node => <Flow col className="h-full" items={items} />;
const RSep = () => <div className="w-px h-[131px] bg-[#e2e3e4] mb-[2px]" />;

function Ribbon({ resize }: { resize?: boolean }) {
  return (
    <div className="h-[139px] shrink-0 bg-[#f5f6f7] border-t border-b border-[#dadbdc] text-[15px] text-[#3b3b3b] [&>div>div]:h-full">
      <Flow
        from={0}
        items={[
          [18, 134, <div className="w-full h-full">{rib([
            [0, 112, <div className="flex h-full">
              <div className="w-[66px] flex flex-col pl-[2px] pt-[11px]">
                <Svg w={36} h={43} className="ml-px"><path d="M1 4h34v38H1z" fill="#a9763f" stroke="#7c5226" /><path d="M5 8h26v31H5z" fill="#fff" /><path d="M8 15h20M8 19h20M8 23h20M8 27h20M8 31h20" stroke="#c2cad6" strokeWidth="1.300" /><path d="M10 8V4h5q0-4 3-4t3 4h5v4z" fill="#c9cdd2" stroke="#6f757c" /></Svg>
                <T w={36} className="mt-[11px]">Paste</T>
                <div className="pl-[13px] mt-[5px]"><Tri c="#000" w={8} h={5} /></div>
              </div>
              <div className="text-[#8c8f94]">
                <Flow col items={[
                  line(23, 24, [[-4, 16, <Scissors c="#9fb0c8" />], tx(18, 24, "Cut")], 0),
                  line(56, 24, [[-5, 20, <CopyIcon c="#a3b4cc" f="#f0f4f9" />], tx(18, 36, "Copy")], 0),
                ]} />
              </div>
            </div>],
            [115, 20, <div className="pl-[23px]"><Label t="Clipboard" w={68} /></div>],
          ])}</div>],
          [152, 1, <RSep />],
          [153, 171, <div className="w-full h-full">{rib([
            [0, 112, <div className="flex h-full">
              <div className="w-[68px] pl-[15px] pt-[17px]">
                <Svg w={42} h={34}><rect x="0.800" y="0.800" width="40" height="32" stroke="#2f6fb5" strokeWidth="1.400" strokeDasharray="2.500 1.500" /></Svg>
                <T w={41} className="mt-[14px]">Select</T>
                <div className="pl-[15px] mt-[5px]"><Tri c="#000" w={8} h={5} /></div>
              </div>
              <Flow col items={[
                line(23, 24, [[4, 22, <Svg w={21} h={20}><path d="M5 0v15h16M0 5h16v15M20 0L5 15" stroke="#9fb0c8" strokeWidth="1.800" /></Svg>], tx(31, 33, "Crop", "text-[#8c8f94]")], 0),
                line(56, 24, [[4, 22, <Svg w={21} h={19}><path d="M7 1h13v11H7zM1 8h9v10H1z" fill={resize ? "#eaf4fb" : "#f2f6fa"} stroke={resize ? "#2f6fa8" : "#8fa9c8"} strokeWidth="1.500" /></Svg>], tx(31, 44, "Resize", resize ? "" : "text-[#8c8f94]")], 0),
                line(88, 24, [[2, 24, <Svg w={24} h={20}><path d="M0 19L11 8v11z" fill="#a8adb5" /><path d="M13 0v19h10z" fill="#2e86c1" /><path d="M3 8q0-6 7-6M8 0l3 2-3 3" stroke="#2e86c1" strokeWidth="1.400" /></Svg>], tx(31, 45, "Rotate"), [80, 8, <div className="-mt-[6px]"><Tri c="#000" w={8} h={5} /></div>]], 0),
              ]} />
            </div>],
            [115, 20, <div className="pl-[61px]"><Label t="Image" w={43} /></div>],
          ])}</div>],
          [324, 1, <RSep />],
          [325, 115, <div className="w-full h-full">{rib([
            line(35, 24, [
              ic(22, 20, <Pencil />),
              ic(56, 24, <Svg w={24} h={22}><path d="M8 6l11 6-7 9-9-7z" fill="#d5e5f2" stroke="#6f8fae" /><path d="M12 0v10" stroke="#5b6d80" strokeWidth="1.500" /><path d="M3 13q-3 2-2 9l5-7z" fill="#e8703a" /></Svg>),
              [79, 22, <span className="block text-[30px] leading-none font-bold text-[#1e395b] font-['Liberation_Serif',serif]">A</span>],
            ], 0),
            line(78, 24, [
              ic(22, 24, <Svg w={24} h={20}><path d="M9 1l14 1-7 16-15 1z" fill="#f0938f" stroke="#c2605e" /><path d="M5 11l14 1-3 6-15 1z" fill="#f7bab6" /></Svg>),
              ic(56, 22, <Svg w={22} h={22}><path d="M1 21l2-5L12 7l3 3-9 9z" fill="#cfdbe8" stroke="#7289a3" /><path d="M11 5l6 6M13 7l5-6 3 3-5 5z" stroke="#1e4f8f" strokeWidth="3" fill="#1e4f8f" /></Svg>),
              [82, 22, <Svg w={22} h={22}><circle cx="9" cy="9" r="7.500" fill="#eef6fc" stroke="#8c99a8" strokeWidth="2" /><path d="M14 14l7 7" stroke="#8c6a3a" strokeWidth="3" /></Svg>],
            ], 0),
            [115, 20, <div className="pl-[37px]"><Label t="Tools" w={35} /></div>],
          ])}</div>],
          [440, 1, <RSep />],
          [453, 48, <div className="self-start pt-[10px]"><Svg w={48} h={40}><path d="M0.700 0.700h46.600v39H0.700z" fill="#fbfbfb" stroke="#9a9da2" /><path d="M10 40Q-4 28 12 17q10-7 6-12 6 8-3 15-8 8 1 20z" fill="#e8622c" /><path d="M47 1v10L31 28l-7-5z" fill="#8895a6" /><path d="M24 22l9 7q-2 9-13 10-2-10 4-17z" fill="#a8713a" /></Svg></div>],
          [517, 1, <RSep />],
          [525, 232, <div className="self-start mt-[10px] w-full h-[60px] border border-[#d0d4d9] bg-[#fafcfe] flex overflow-hidden">
            <div className="w-[210px] h-full border-r border-[#d0d4d9] flex flex-col">
              <div className="h-[30px] shrink-0">
                <Flow items={[
                  [2, 24, <Shape d="M1 1l22 18" />], [32, 24, <Shape d="M1 17q5 4 9-5t7-6q2 10 6-5" />], [62, 24, <Shape d="M12 0.700a11 9.300 0 1 0 0.010 0z" />],
                  [90, 30, <div className="w-[30px] h-[29px] bg-[#cbe2f7] border border-[#7db2e0] flex items-center justify-center"><Shape d="M1 1h22v18H1z" /></div>],
                  [122, 24, <Shape d="M5 1h14q4 0 4 4v10q0 4-4 4H5q-4 0-4-4V5q0-4 4-4z" />], [152, 24, <Shape d="M7 1h10l-3 10h9v8H1z" />], [182, 24, <Shape d="M12 1l11 18H1z" />],
                ]} />
              </div>
              <div className="h-[20px] shrink-0 pt-[4px]">
                <Flow items={[
                  [2, 24, <Shape d="M2 1v18l16-4z" />], [32, 24, <Shape d="M12 1L2 10l10 9 9-9z" />], [62, 24, <Shape d="M12 1L2 10l5 9h10l5-9z" />], [92, 24, <Shape d="M12 1l10 5v9l-10 5-10-5V6z" />],
                  [122, 24, <Shape d="M2 1l8 8 12-8v18H2z" />], [152, 24, <Shape d="M12 1v6L2 12l10 5z" />], [182, 24, <Shape d="M12 1L2 10h5v9h10v-9h5z" />],
                ]} />
              </div>
            </div>
            <div className="pl-[6px] pt-[24px]"><Svg w={8} h={6}><path d="M0 6h8L4 0z" fill="#a8adb3" /></Svg></div>
          </div>],
          [766, 100, <div className="self-start pt-[10px] w-full">
            <div className="h-[28px]"><Flow items={[[0, 24, <Svg w={23} h={21}><path d="M1 1h13v19H1z" fill="#fff" stroke="#2f5f8f" strokeWidth="1.400" /><path d="M5 17L18 1l4 3L9 18l-5 2z" fill="#f2c979" stroke="#9b7a3c" /><path d="M18 1l4 3 1-2-3-2z" fill="#5d9b3a" /></Svg>], tx(29, 50, "Outline"), [83, 8, <div className="-mt-[3px]"><Tri c="#000" w={8} h={5} /></div>]]} /></div>
            <Svg w={23} h={12} className="mt-[3px] ml-[1px]"><path d="M13 0l8 12H5z" fill="#bcd3e6" stroke="#7f9fbc" /></Svg>
          </div>],
          [871, 1, <RSep />],
          [884, 48, <div className="self-start pt-[12px]"><Svg w={48} h={40}><path d="M0 0.800h48" stroke="#1e395b" strokeWidth="1.300" /><path d="M0 7.500h48" stroke="#1e395b" strokeWidth="2.600" /><path d="M0 15h48" stroke="#1e395b" strokeWidth="4" /><path d="M0 25h48" stroke="#1e395b" strokeWidth="6" /><path d="M0 36h48" stroke="#1e395b" strokeWidth="6" /></Svg></div>],
          [948, 1, <RSep />],
          [954, 62, <div className="self-start mt-[6px] w-full h-[80px] border border-[#7db2e0] bg-[#cbe0f5] px-[7px] pt-[3px]"><div className="w-full h-[44px] border-[1.600px] border-[#8c9299] bg-[#e8eef4] p-[1.500px]"><div className="w-full h-full bg-[#ffc90e]" /></div></div>],
          [1029, 36, <div className="self-start mt-[16px] w-full h-[34px] border-[1.600px] border-[#8c9299] bg-white" />],
          [1079, 330, <div className="self-start pt-[7px] flex flex-col gap-[2px]"><div className="flex gap-[2px]">{ROW1.map((c) => <Swatch key={c} c={c} />)}</div><div className="flex gap-[2px]">{ROW2.map((c) => <Swatch key={c} c={c} />)}</div></div>],
          [1417, 43, <div className="self-start pt-[12px] w-full">
            <div className="w-[43px] h-[43px] bg-white border border-[#a0a0a0] p-[2px]"><div className="w-full h-full bg-[linear-gradient(transparent_30%,rgba(128,128,128,0.900)),linear-gradient(to_right,#ff2020,#ffff00,#00e020,#00e0ff,#1010ff,#ff00ff,#ff2060)]" /></div>
            <T w={25} className="ml-[10px] mt-[10px]">Edit</T>
            <T w={40} className="ml-[3px] mt-[1px]">colors</T>
          </div>],
          [1479, 1, <RSep />],
        ]}
      />
    </div>
  );
}

const SizeIcon = ({ dash }: { dash?: boolean }) => (
  <Svg w={22} h={22}><path d="M2.500 1v16M0.500 4l2-3 2 3M6 20.500h14M18 18.500l3 2-3 2" stroke="#1e395b" strokeWidth="1.300" /><rect x="6.500" y="1.500" width="14" height="15" stroke="#1e395b" strokeWidth="1.300" strokeDasharray={dash ? "2 1" : undefined} fill={dash ? "none" : "#e3eefa"} /></Svg>
);
const Round = ({ plus }: { plus?: boolean }) => (
  <Svg w={23} h={23}><circle cx="11.500" cy="11.500" r="10.500" fill="#ececec" stroke="#8f8f8f" strokeWidth="1.300" /><path d={plus ? "M6 11.500h11M11.500 6v11" : "M6 11.500h11"} stroke="#555" strokeWidth="2.300" /></Svg>
);

type PaintProps = {
  resize?: boolean; canvas?: Node; canvasBg?: string; vTop: number; vH: number; hLeft: number; hW: number;
  pos?: [string, number]; sel?: [string, number]; dims: [string, number]; children?: Node;
};

function Paint(p: PaintProps) {
  const divider = <div className="w-px h-[36px] bg-[#d7d7d7]" />;
  return (
    <div className="relative w-[1920px] h-[1080px] shrink-0 overflow-hidden bg-white flex flex-col font-['Open_Sans',sans-serif] text-[16px] text-black">
      <VmTitle />
      <div className="h-[34px] shrink-0 text-[16.500px] text-[#999999]">
        <Flow items={[
          ic(12, 23, <Svg w={23} h={23}><path d="M11 3q11 0 11 9 0 5-6 4-4-1-3 3t-4 3Q1 20 1 12t10-9z" fill="#bcd9f0" stroke="#6f97bd" /><circle cx="6" cy="9" r="2" fill="#e04a3a" /><circle cx="11" cy="7" r="2" fill="#f2b52e" /><circle cx="5" cy="14" r="2" fill="#3fa34a" /><circle cx="8" cy="18" r="1.800" fill="#3f66d0" /><path d="M12 15l7-14 3 1-7 14z" fill="#d99a4a" stroke="#9b6a2c" strokeWidth="0.800" /></Svg>),
          ic(30, 1, <div className="w-px h-[18px] bg-[#8a8a8a]" />),
          ic(58, 17, <Svg w={17} h={17}><path d="M0.500 0.500h16v16h-16z" fill="#6b4fa8" /><path d="M4 1h9v7H4z" fill="#fff" /><path d="M5 11h7v6H5z" fill="#e9e4f3" /><path d="M10 12h1.500v3.500H10z" fill="#6b4fa8" /></Svg>),
          ic(90, 20, <Curl c="#2ba3e4" w={20} />), ic(122, 20, <Curl flip c="#a9b4c6" w={20} />),
          ic(149, 9, <Svg w={9} h={10}><path d="M0 1h9" stroke="#222" strokeWidth="1.500" /><path d="M0 4h9L4.500 9z" fill="#222" /></Svg>),
          ic(170, 1, <div className="w-px h-[19px] bg-[#8a8a8a]" />),
          tx(177, 302, "jpg-books_login-properties.jpg - Paint"), [1736, 160, <WinButtons c="#999999" />],
        ]} />
      </div>
      <div className="h-[34px] shrink-0 text-[15px] text-[#3b3b3b]">
        <Flow items={[
          [1, 82, <div className="w-full h-[34px] bg-[#1979ca] text-white flex items-center justify-center"><T w={24}>File</T></div>],
          [83, 82, <div className="relative w-full h-[35px] mb-[-1px] bg-[#f5f6f7] border border-b-0 border-[#dadbdc] flex items-center justify-center"><T w={41}>Home</T></div>],
          tx(186, 34, "View"),
          ic(1871, 17, <Svg w={17} h={11}><path d="M1 10l7.500-8 7.500 8" stroke="#a0a0a0" strokeWidth="1.800" /></Svg>),
          ic(1903, 22, <div className="w-[22px] h-[22px] rounded-full bg-[#0f75d1] text-white text-[14px] font-bold leading-[22px] text-center">?</div>),
        ]} />
      </div>
      <Ribbon resize={p.resize} />
      <div className="h-[774px] shrink-0 flex">
        <div className={"relative ml-px w-[1893px] h-full overflow-hidden " + (p.canvasBg || "bg-white")}>{p.canvas}</div>
        <div className="w-[26px] h-full bg-[#f0f0f0]">
          <Flow col from={241} items={[
            ic(256, 14, <div className="pl-[6px]"><Chevron dir="u" /></div>),
            [p.vTop, p.vH, <div className="h-full bg-[#c4c4c4]" />],
            ic(1002, 14, <div className="pl-[6px]"><Chevron dir="d" /></div>),
          ]} />
        </div>
      </div>
      <div className="h-[25px] shrink-0 bg-[#f0f0f0]">
        <Flow items={[ic(12, 13, <Chevron dir="l" />), [p.hLeft, p.hW, <div className="w-full h-[24px] bg-[#cdcdcd]" />], ic(1879, 13, <Chevron dir="r" />)]} />
      </div>
      <div className="h-[40px] shrink-0 bg-[#f0f0f0] border-t border-[#d4d4d4] text-[15.500px] pb-px">
        <Flow items={[
          ic(12, 20, <Svg w={20} h={20}><path d="M10 1v18M1 10h18M8 3l2-2.500L12 3M8 17l2 2.500 2-2.500M3 8l-2.500 2L3 12M17 8l2.500 2-2.500 2" stroke="#1e395b" strokeWidth="1.500" /></Svg>),
          tx(28, 111, p.pos ? p.pos[0] : ""),
          [243, 1, divider], ic(260, 22, <SizeIcon dash />), tx(276, p.sel ? p.sel[1] : 10, p.sel ? p.sel[0] : ""),
          [488, 1, divider], ic(504, 22, <SizeIcon />), tx(521, p.dims[1], p.dims[0]),
          [733, 1, divider], ic(750, 18, <Svg w={18} h={20}><path d="M1 1h13l3 3v15H1z" fill="#f2f7fc" stroke="#1e395b" strokeWidth="1.400" /><path d="M4.500 1v8h9V1M5 19v-6h8v6M9 14v4" stroke="#1e395b" strokeWidth="1.400" /></Svg>), tx(767, 103, "Size: 465.6KB"),
          [978, 1, divider], [1625, 1, divider], tx(1652, 43, "100%"), ic(1718, 23, <Round />),
          [1747, 126, <div className="w-full h-[6px] bg-[#e7e7e7] border border-[#cfcfcf] flex items-center pl-[56px]"><Svg w={15} h={27}><path d="M0 0h15v20l-7.500 7L0 20z" fill="#0078d7" /></Svg></div>],
          ic(1901, 23, <Round plus />),
        ]} />
      </div>
      <Frame />
      {p.children}
    </div>
  );
}

/* ---------- page ---------- */

const Mark = ({ at }: { at: string }) => <div className={"absolute border-[3.200px] border-[#f5c62b] " + at} />;

function GeneralScreen() {
  return (
    <Studio>
      <Dialog page="General" soft><GeneralPage /></Dialog>
      <Mark at="left-[406px] top-[219px] w-[561px] h-[27px]" />
    </Studio>
  );
}

function LoginsScreen() {
  return (
    <Studio active focus>
      <Mark at="left-[9px] top-[221.500px] w-[452px] h-[28px]" />
      <Mark at="left-[16.500px] top-[277px] w-[498px] h-[31px]" />
      <Mark at="left-[73px] top-[385px] w-[512px] h-[39px]" />
      <div className="absolute left-[456px] top-[765px] w-[619px] h-[5px] bg-[#ffc90e]" />
    </Studio>
  );
}

export default function App() {
  const wide: [string, number] = ["2056 × 6304px", 122];
  return (
    <div className="[zoom:0.6497] bg-white w-[4740px] flex flex-col gap-[78px]">
      <div className="flex gap-[15px]">
        <LoginsScreen />
        <Paint
          vTop={267} vH={88} hLeft={763} hW={734} sel={["617 × 3px", 81]} dims={["4744 × 6304px", 120]} canvasBg="bg-[#c9d1e1]"
          canvas={<div className="mt-[5px] h-full bg-white relative"><div className="absolute top-0 -left-[1903px]"><LoginsScreen /></div></div>}
        >
          <Dialog page="Status" at="left-[419px]"><StatusPage /></Dialog>
          <Mark at="left-[221px] top-[307px] w-[325px] h-[65px]" />
          <Mark at="left-[612.500px] top-[326px] w-[196px] h-[35px]" />
          <Mark at="left-[612.500px] top-[447.500px] w-[246px] h-[35px]" />
        </Paint>
      </div>
      <GeneralScreen />
      <Paint
        resize vTop={422} vH={85} hLeft={26} hW={1687} pos={["1835, 1825px", 111]} dims={wide} canvasBg="bg-[#c9d1e1]"
        canvas={<div className="absolute left-[4px] -top-[188px]"><GeneralScreen /></div>}
      >
        <Dialog page="Server Roles"><RolesPage /></Dialog>
        <Mark at="left-[392px] top-[237.500px] w-[809px] h-[36px]" />
        <Mark at="left-[570px] top-[395px] w-[257px] h-[25px]" />
      </Paint>
      <Paint resize vTop={663} vH={88} hLeft={26} hW={1687} dims={wide}>
        <Dialog page="User Mapping"><MappingPage /></Dialog>
        <Mark at="left-[262px] top-[264.500px] w-[313px] h-[31px]" />
        <Mark at="left-[594.500px] top-[294px] w-[192px] h-[29px]" />
        <Mark at="left-[572px] top-[764px] w-[407px] h-[25px]" />
        <Mark at="left-[540px] top-[804px] w-[251px] h-[51px]" />
      </Paint>
      <Paint resize vTop={795} vH={88} hLeft={26} hW={1687} dims={wide}>
        <Dialog page="Securables"><SecurablesPage /></Dialog>
        <Mark at="left-[207px] top-[287px] w-[346px] h-[31px]" />
        <Mark at="left-[323px] top-[776.500px] w-[896px] h-[31.500px]" />
      </Paint>
    </div>
  );
}
